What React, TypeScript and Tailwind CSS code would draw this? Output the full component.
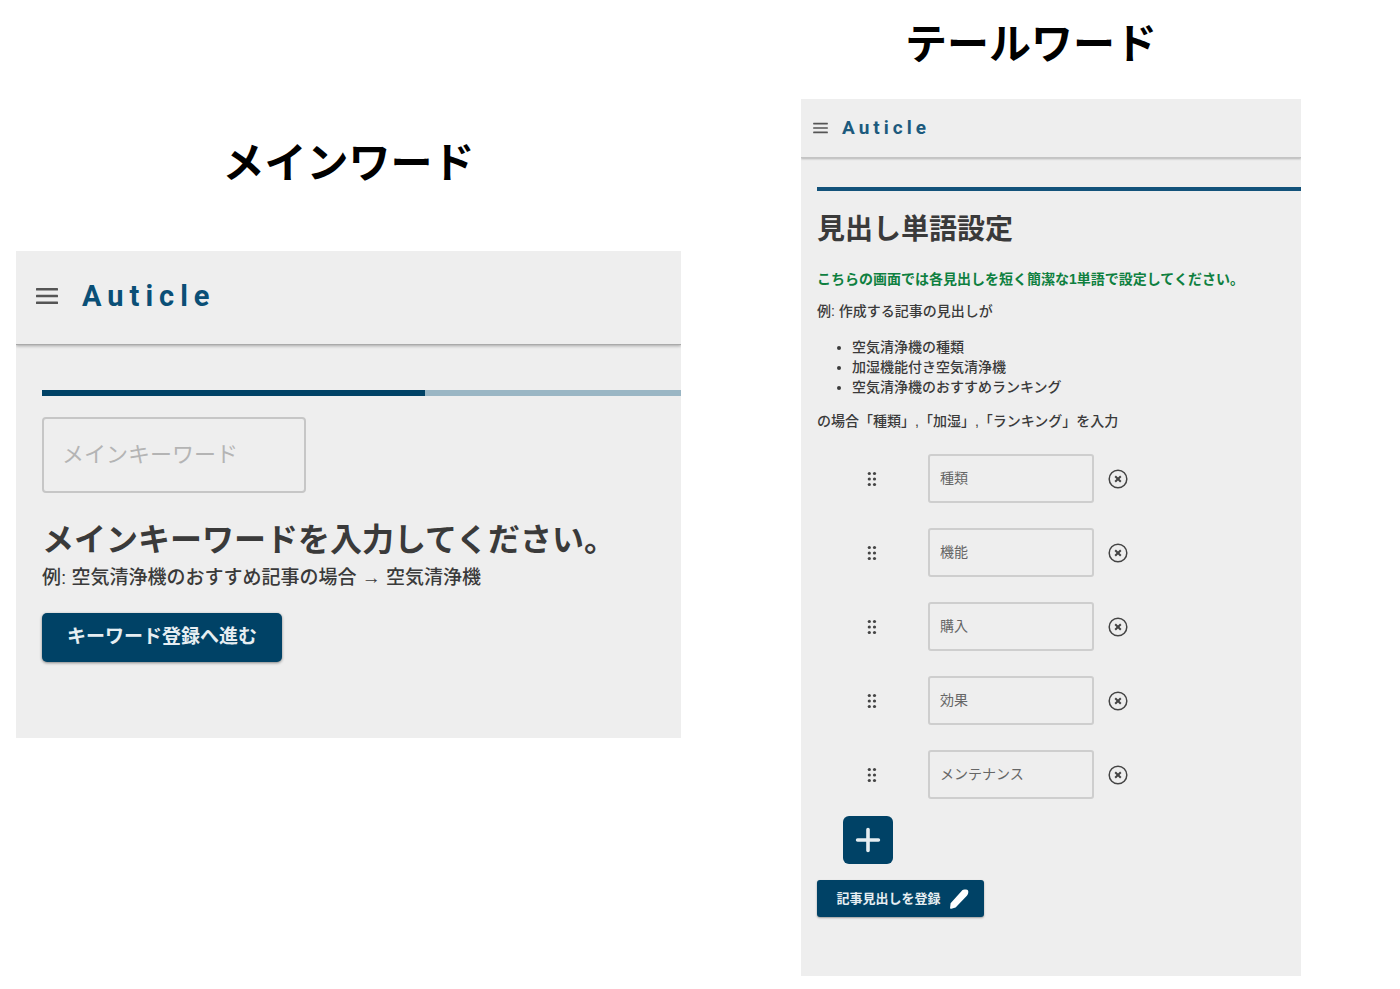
import React, { useState } from "react";

const initialWords = ["種類", "機能", "購入", "効果", "メンテナンス"];

const examples = [
  "空気清浄機の種類",
  "加湿機能付き空気清浄機",
  "空気清浄機のおすすめランキング",
];

function MenuIcon({ className }: { className: string }) {
  return (
    <svg viewBox="0 0 22 18" className={className} fill="#555" aria-hidden="true">
      <rect x="0" y="1" width="22" height="2.6" rx="0.6" />
      <rect x="0" y="7.7" width="22" height="2.6" rx="0.6" />
      <rect x="0" y="14.4" width="22" height="2.6" rx="0.6" />
    </svg>
  );
}

function DragIcon() {
  return (
    <svg viewBox="0 0 10 16" className="h-4 w-[10px]" fill="#444" aria-hidden="true">
      {[2.5, 8, 13.5].map((y) => (
        <g key={y}>
          <circle cx="2.3" cy={y} r="1.6" />
          <circle cx="7.5" cy={y} r="1.6" />
        </g>
      ))}
    </svg>
  );
}

function RemoveIcon() {
  return (
    <svg viewBox="0 0 20 20" className="size-5" fill="none" stroke="#444" aria-hidden="true">
      <circle cx="10" cy="10" r="8.8" strokeWidth="1.5" />
      <path d="M7.2 7.2l5.6 5.6M12.8 7.2l-5.6 5.6" strokeWidth="2" />
    </svg>
  );
}

function PlusIcon() {
  return (
    <svg viewBox="0 0 26 26" className="size-[26px]" fill="none" stroke="#e6eef2" strokeWidth="3.6" strokeLinecap="round" aria-hidden="true">
      <path d="M13 2.6v20.8M2.6 13h20.8" />
    </svg>
  );
}

function PencilIcon() {
  return (
    <svg viewBox="0 0 20 20" className="size-5" fill="#fff" aria-hidden="true">
      <path d="M1 19.4l.6-5.2L12.4 2.2C13.4 1 14.8.6 17 .6c1.8 0 2.4.9 2.3 2.4-.1 1.7-.6 2.9-1.9 4.2L6.6 18.4 2.4 19.8z" />
    </svg>
  );
}

function MainWordPanel() {
  return (
    <div className="overflow-hidden bg-[#eee] pb-[76px]">
      <header className="flex h-[94px] items-center gap-6 border-b border-[#aaa] pb-1 pl-5 shadow-[0_1px_3px_rgba(0,0,0,0.3)]">
        <button type="button" aria-label="メニュー">
          <MenuIcon className="h-[18px] w-[22px]" />
        </button>
        <a href="#" className="font-[Roboto,sans-serif] text-[29px] leading-8 font-bold tracking-[6px] text-[#0a4f76]">
          Auticle
        </a>
      </header>
      <main className="pt-[45px] pl-[26px]">
        <div className="h-[6px] bg-[#9ab6c4]" role="progressbar" aria-valuenow={60} aria-label="進捗">
          <div className="h-full w-[60%] bg-[#004266]" />
        </div>
        <input
          type="text"
          aria-label="メインキーワード"
          placeholder="メインキーワード"
          className="mt-[21px] block h-[76px] w-[264px] rounded-[4px] border-2 border-[#c6c6c6] bg-transparent pr-4 pl-[18px] text-[22px] text-[#333] placeholder:text-[#b4b4b4]"
        />
        <h2 className="mt-[23px] text-[32px] leading-[48px] font-bold">メインキーワードを入力してください。</h2>
        <p className="text-[19px] leading-7 font-medium">例: 空気清浄機のおすすめ記事の場合 → 空気清浄機</p>
        <button
          type="button"
          className="mt-[21px] flex h-[49px] w-[240px] items-center justify-center rounded-[5px] bg-[#004266] text-[19px] font-bold text-[#e6eef2] shadow-[0_1px_3px_rgba(0,0,0,0.45)]"
        >
          キーワード登録へ進む
        </button>
      </main>
    </div>
  );
}

function TailWordPanel() {
  const [words, setWords] = useState(initialWords);
  const update = (index: number, value: string) =>
    setWords(words.map((word, i) => (i === index ? value : word)));

  return (
    <div className="overflow-hidden bg-[#eee] pb-[59px]">
      <header className="flex h-[59px] items-center gap-[14px] border-b border-[#c4c4c4] pl-3 shadow-[0_1px_2px_rgba(0,0,0,0.25)]">
        <button type="button" aria-label="メニュー">
          <MenuIcon className="h-3 w-[15px]" />
        </button>
        <a href="#" className="font-[Roboto,sans-serif] text-[19px] leading-6 font-bold tracking-[4px] text-[#1c5a7d]">
          Auticle
        </a>
      </header>
      <main className="pt-[29px] pl-4">
        <div className="h-1 bg-[#12527a]" role="progressbar" aria-valuenow={100} aria-label="進捗" />
        <h2 className="mt-[19px] text-[28px] leading-10 font-bold">見出し単語設定</h2>
        <p className="mt-[19px] text-sm leading-5 font-bold text-[#0e8040]">
          こちらの画面では各見出しを短く簡潔な1単語で設定してください。
        </p>
        <div className="text-sm leading-5 font-medium">
          <p className="mt-3">例: 作成する記事の見出しが</p>
          <ul className="mt-4 list-disc pl-[35px]">
            {examples.map((example) => (
              <li key={example}>{example}</li>
            ))}
          </ul>
          <p className="mt-[14px]">の場合「種類」,「加湿」,「ランキング」を入力</p>
        </div>
        <div className="mt-[23px] flex flex-col gap-[25px]">
          {words.map((word, index) => (
            <div key={index} className="flex items-center pl-[50px]">
              <button type="button" aria-label="並べ替え" className="mr-[51px]">
                <DragIcon />
              </button>
              <input
                type="text"
                aria-label={`見出し ${index + 1}`}
                value={word}
                onChange={(event) => update(index, event.target.value)}
                className="h-[49px] w-[166px] rounded-[3px] border-2 border-[#cecece] bg-transparent px-[10px] pb-[3px] text-sm text-[#666]"
              />
              <button
                type="button"
                aria-label="削除"
                className="ml-[14px]"
                onClick={() => setWords(words.filter((_, i) => i !== index))}
              >
                <RemoveIcon />
              </button>
            </div>
          ))}
        </div>
        <button
          type="button"
          aria-label="追加"
          onClick={() => setWords([...words, ""])}
          className="mt-[17px] ml-[26px] flex h-12 w-[50px] items-center justify-center rounded-md bg-[#004266]"
        >
          <PlusIcon />
        </button>
        <button
          type="button"
          className="mt-4 flex h-[37px] w-[167px] items-center justify-center gap-2 rounded-[3px] bg-[#004266] pl-1 text-[13px] font-bold text-[#e6eef2] shadow-[0_1px_2px_rgba(0,0,0,0.35)]"
        >
          記事見出しを登録
          <PencilIcon />
        </button>
      </main>
    </div>
  );
}

export default function App() {
  return (
    <div
      lang="ja"
      className="grid min-h-screen grid-cols-[665fr_500fr] items-start gap-[120px] bg-white pt-[15px] pr-[99px] pb-[13px] pl-4 font-['Liberation_Sans','Noto_Sans_CJK_JP',sans-serif] text-[#3a3a3a]"
    >
      <section className="pt-[119px]">
        <h1 className="mb-[57px] text-center text-[42px] leading-[60px] font-bold text-black">メインワード</h1>
        <MainWordPanel />
      </section>
      <section>
        <h1 className="mb-6 pr-10 text-center text-[42px] leading-[60px] font-bold text-black">テールワード</h1>
        <TailWordPanel />
      </section>
    </div>
  );
}
